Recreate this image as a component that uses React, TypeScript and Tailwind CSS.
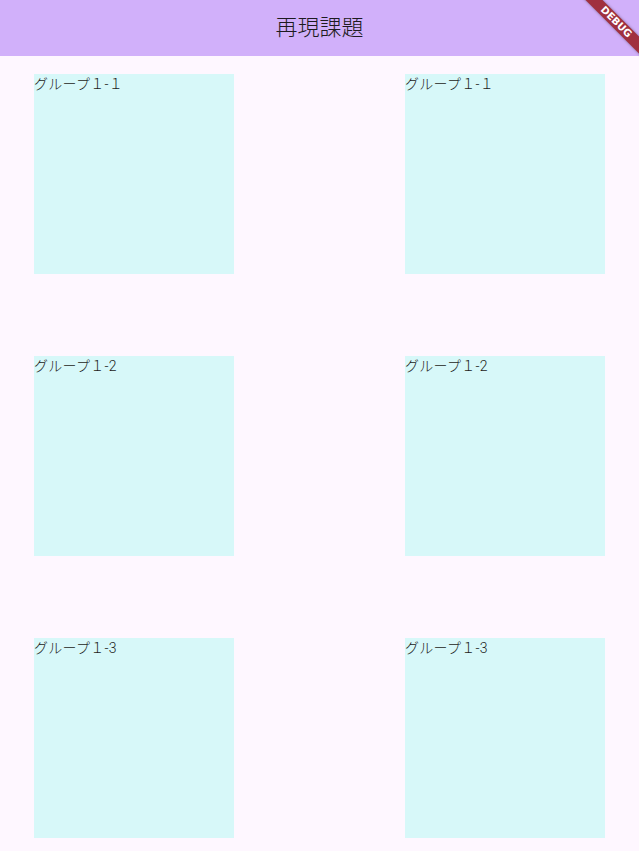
import React from 'react';

const rows = ['グループ１-１', 'グループ１-2', 'グループ１-3'];

function Box({ label }: { label: string }) {
  return (
    <div className="w-[200px] h-[200px] bg-[#d7f8f9]">
      <span className="block text-[14px] leading-[21px] tracking-[0.25px] text-[#1d1b20] font-light">
        {label}
      </span>
    </div>
  );
}

export default function App() {
  return (
    <div
      className="relative w-[639px] h-[851px] overflow-hidden bg-[#fef7ff]"
      style={{ fontFamily: 'Roboto, "Noto Sans CJK JP", sans-serif' }}
    >
      <header className="h-[56px] bg-[#d1b0fa] flex items-center justify-center">
        <h1 className="text-[22px] leading-none text-[#1d1b20] font-light">再現課題</h1>
      </header>

      <div className="flex flex-col gap-[82px] pt-[18px] px-[34px]">
        {rows.map((label) => (
          <div key={label} className="flex justify-between">
            <Box label={label} />
            <Box label={label} />
          </div>
        ))}
      </div>

      {/* debug banner */}
      <div className="absolute left-[566px] top-[16px] w-[100px] h-[12px] rotate-45 bg-[#a0303f] shadow-[0_0_3px_rgba(0,0,0,0.4)] flex items-center justify-center">
        <span
          className="text-white text-[10px] font-bold leading-none"
          style={{ fontFamily: '"DejaVu Sans", sans-serif' }}
        >
          DEBUG
        </span>
      </div>
    </div>
  );
}
